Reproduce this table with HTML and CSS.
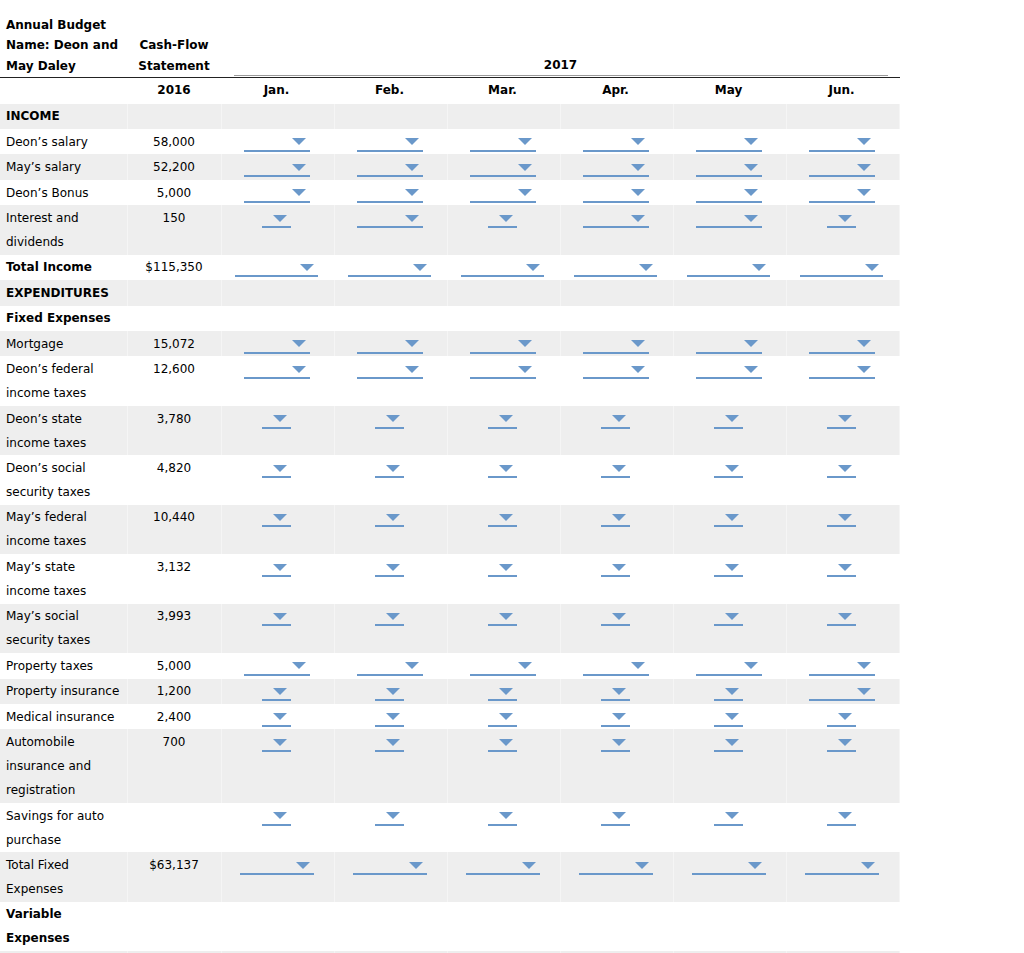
FILE: index.html
```html
<!DOCTYPE html>
<html>
<head>
<meta charset="utf-8">
<link rel="stylesheet" href="styles.css">
</head>
<body>
<table class="budget">
  <colgroup>
    <col class="c-label"><col class="c-base">
    <col class="c-m"><col class="c-m"><col class="c-m"><col class="c-m"><col class="c-m"><col class="c-m">
  </colgroup>
  <thead>
    <tr class="head-top">
      <th class="lbl">Annual Budget<br>Name: Deon and<br>May Daley</th>
      <th class="base">Cash-Flow<br>Statement</th>
      <th colspan="6" class="year"><div class="year-in">2017</div></th>
    </tr>
    <tr class="head-months">
      <th class="lbl"></th>
      <th class="base">2016</th>
      <th>Jan.</th><th>Feb.</th><th>Mar.</th><th>Apr.</th><th>May</th><th>Jun.</th>
    </tr>
  </thead>
  <tbody>
    <tr class="alt"><td class="lbl b">INCOME</td><td></td><td></td><td></td><td></td><td></td><td></td><td></td></tr>
    <tr><td class="lbl">Deon’s salary</td><td class="base">58,000</td>
      <td><span class="dd w"></span></td><td><span class="dd w"></span></td><td><span class="dd w"></span></td><td><span class="dd w"></span></td><td><span class="dd w"></span></td><td><span class="dd w"></span></td></tr>
    <tr class="alt"><td class="lbl">May’s salary</td><td class="base">52,200</td>
      <td><span class="dd w"></span></td><td><span class="dd w"></span></td><td><span class="dd w"></span></td><td><span class="dd w"></span></td><td><span class="dd w"></span></td><td><span class="dd w"></span></td></tr>
    <tr><td class="lbl">Deon’s Bonus</td><td class="base">5,000</td>
      <td><span class="dd w"></span></td><td><span class="dd w"></span></td><td><span class="dd w"></span></td><td><span class="dd w"></span></td><td><span class="dd w"></span></td><td><span class="dd w"></span></td></tr>
    <tr class="alt"><td class="lbl">Interest and<br>dividends</td><td class="base">150</td>
      <td><span class="dd n"></span></td><td><span class="dd w"></span></td><td><span class="dd n"></span></td><td><span class="dd w"></span></td><td><span class="dd w"></span></td><td><span class="dd n"></span></td></tr>
    <tr><td class="lbl b">Total Income</td><td class="base">$115,350</td>
      <td><span class="dd x"></span></td><td><span class="dd x"></span></td><td><span class="dd x"></span></td><td><span class="dd x"></span></td><td><span class="dd x"></span></td><td><span class="dd x"></span></td></tr>
    <tr class="alt"><td class="lbl b">EXPENDITURES</td><td></td><td></td><td></td><td></td><td></td><td></td><td></td></tr>
    <tr><td class="lbl b">Fixed Expenses</td><td></td><td></td><td></td><td></td><td></td><td></td><td></td></tr>
    <tr class="alt"><td class="lbl">Mortgage</td><td class="base">15,072</td>
      <td><span class="dd w"></span></td><td><span class="dd w"></span></td><td><span class="dd w"></span></td><td><span class="dd w"></span></td><td><span class="dd w"></span></td><td><span class="dd w"></span></td></tr>
    <tr><td class="lbl">Deon’s federal<br>income taxes</td><td class="base">12,600</td>
      <td><span class="dd w"></span></td><td><span class="dd w"></span></td><td><span class="dd w"></span></td><td><span class="dd w"></span></td><td><span class="dd w"></span></td><td><span class="dd w"></span></td></tr>
    <tr class="alt"><td class="lbl">Deon’s state<br>income taxes</td><td class="base">3,780</td>
      <td><span class="dd n"></span></td><td><span class="dd n"></span></td><td><span class="dd n"></span></td><td><span class="dd n"></span></td><td><span class="dd n"></span></td><td><span class="dd n"></span></td></tr>
    <tr><td class="lbl">Deon’s social<br>security taxes</td><td class="base">4,820</td>
      <td><span class="dd n"></span></td><td><span class="dd n"></span></td><td><span class="dd n"></span></td><td><span class="dd n"></span></td><td><span class="dd n"></span></td><td><span class="dd n"></span></td></tr>
    <tr class="alt"><td class="lbl">May’s federal<br>income taxes</td><td class="base">10,440</td>
      <td><span class="dd n"></span></td><td><span class="dd n"></span></td><td><span class="dd n"></span></td><td><span class="dd n"></span></td><td><span class="dd n"></span></td><td><span class="dd n"></span></td></tr>
    <tr><td class="lbl">May’s state<br>income taxes</td><td class="base">3,132</td>
      <td><span class="dd n"></span></td><td><span class="dd n"></span></td><td><span class="dd n"></span></td><td><span class="dd n"></span></td><td><span class="dd n"></span></td><td><span class="dd n"></span></td></tr>
    <tr class="alt"><td class="lbl">May’s social<br>security taxes</td><td class="base">3,993</td>
      <td><span class="dd n"></span></td><td><span class="dd n"></span></td><td><span class="dd n"></span></td><td><span class="dd n"></span></td><td><span class="dd n"></span></td><td><span class="dd n"></span></td></tr>
    <tr><td class="lbl">Property taxes</td><td class="base">5,000</td>
      <td><span class="dd w"></span></td><td><span class="dd w"></span></td><td><span class="dd w"></span></td><td><span class="dd w"></span></td><td><span class="dd w"></span></td><td><span class="dd w"></span></td></tr>
    <tr class="alt"><td class="lbl">Property insurance</td><td class="base">1,200</td>
      <td><span class="dd n"></span></td><td><span class="dd n"></span></td><td><span class="dd n"></span></td><td><span class="dd n"></span></td><td><span class="dd n"></span></td><td><span class="dd w"></span></td></tr>
    <tr><td class="lbl">Medical insurance</td><td class="base">2,400</td>
      <td><span class="dd n"></span></td><td><span class="dd n"></span></td><td><span class="dd n"></span></td><td><span class="dd n"></span></td><td><span class="dd n"></span></td><td><span class="dd n"></span></td></tr>
    <tr class="alt"><td class="lbl">Automobile<br>insurance and<br>registration</td><td class="base">700</td>
      <td><span class="dd n"></span></td><td><span class="dd n"></span></td><td><span class="dd n"></span></td><td><span class="dd n"></span></td><td><span class="dd n"></span></td><td><span class="dd n"></span></td></tr>
    <tr><td class="lbl">Savings for auto<br>purchase</td><td class="base"></td>
      <td><span class="dd n"></span></td><td><span class="dd n"></span></td><td><span class="dd n"></span></td><td><span class="dd n"></span></td><td><span class="dd n"></span></td><td><span class="dd n"></span></td></tr>
    <tr class="alt"><td class="lbl">Total Fixed<br>Expenses</td><td class="base">$63,137</td>
      <td><span class="dd m"></span></td><td><span class="dd m"></span></td><td><span class="dd m"></span></td><td><span class="dd m"></span></td><td><span class="dd m"></span></td><td><span class="dd m"></span></td></tr>
    <tr><td class="lbl b">Variable<br>Expenses</td><td></td><td></td><td></td><td></td><td></td><td></td><td></td></tr>
    <tr class="alt"><td class="lbl">&nbsp;</td><td></td><td></td><td></td><td></td><td></td><td></td><td></td></tr>
  </tbody>
</table>
</body>
</html>
```
FILE: styles.css
```css
html, body {
  margin: 0;
  padding: 0;
  background: #ffffff;
}
body {
  padding-top: 14.5px;
  font-family: "DejaVu Sans", Verdana, sans-serif;
  font-size: 12px;
  color: #000;
}
.budget {
  width: 899px;
  table-layout: fixed;
  border-collapse: collapse;
  border-spacing: 0;
}
.c-label { width: 127px; }
.c-base { width: 94px; }
.c-m { width: 113px; }

.budget th, .budget td {
  padding: 0.72px 8px 0.72px 6px;
  line-height: 24px;
  text-align: center;
  vertical-align: top;
  white-space: nowrap;
  border-right: 1px solid #ffffff;
}
.budget th {
  font-weight: bold;
}
.budget .lbl {
  text-align: left;
  padding-left: 6px;
}
.budget .base {
  padding-left: 6px;
  padding-right: 6px;
}
.b { font-weight: bold; }

.head-top th {
  line-height: 20.5px;
  vertical-align: bottom;
  padding-top: 0;
  padding-bottom: 1px;
  border-bottom: 1px solid #222;
}
.head-top .year {
  padding-left: 6px;
  padding-right: 6px;
}
.year-in {
  margin: 0 5px 0 6px;
  border-bottom: 1px solid #9a9a9a;
  text-align: center;
}
.head-months th {
  padding-top: 0;
  padding-bottom: 1.5px;
}

.alt td {
  background: #eeeeee;
  border-right-color: #f5f5f5;
}

.dd {
  display: inline-block;
  vertical-align: top;
  height: 20px;
  border-bottom: 2px solid #6a98ca;
  position: relative;
}
.dd::after {
  content: "";
  position: absolute;
  right: 4px;
  top: 8.7px;
  width: 0;
  height: 0;
  border-left: 7px solid transparent;
  border-right: 7px solid transparent;
  border-top: 7px solid #6a98ca;
}
.dd.w { width: 66px; }
.dd.n { width: 29px; }
.dd.x { width: 83px; }
.dd.m { width: 74px; }
```
